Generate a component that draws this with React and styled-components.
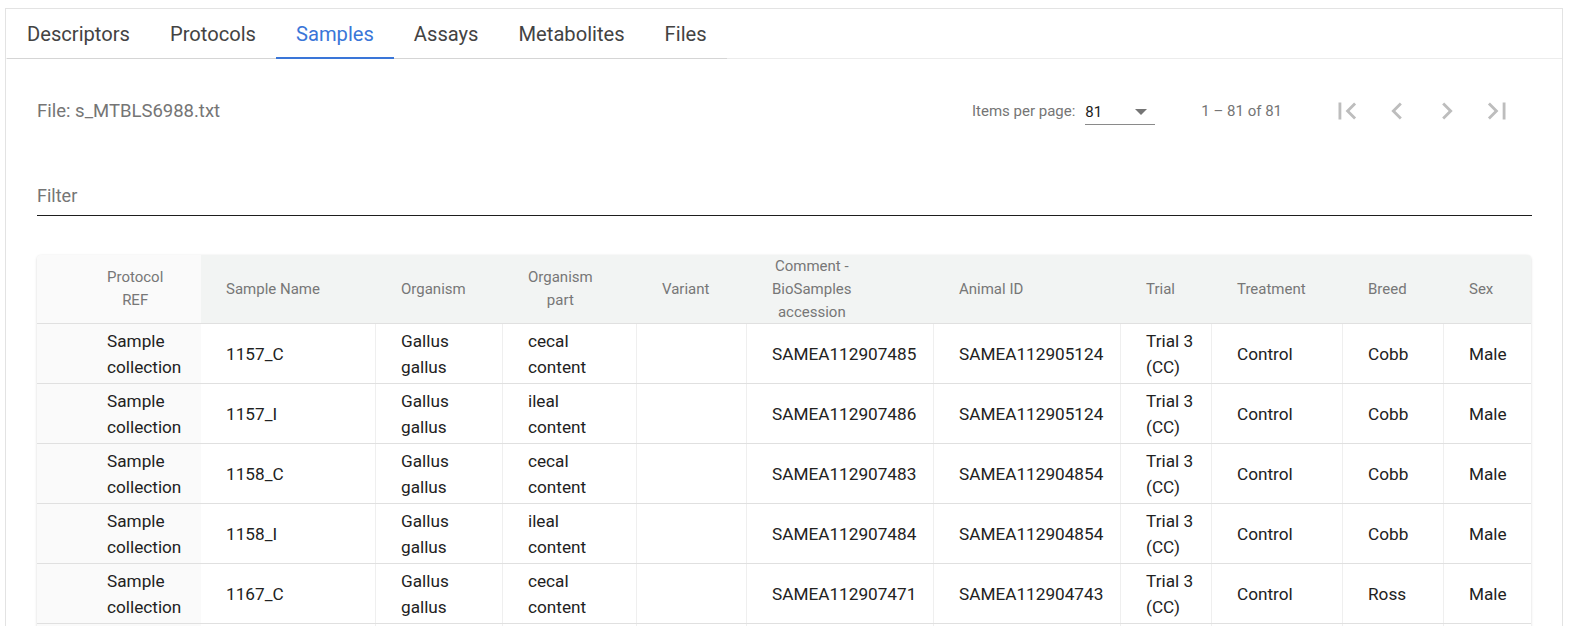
import React from 'react';
import styled, { createGlobalStyle, css } from 'styled-components';

const GlobalStyle = createGlobalStyle`
  html, body {
    margin: 0;
    padding: 0;
    overflow: hidden;
    background: #ffffff;
    font-family: Roboto, "Liberation Sans", sans-serif;
  }
`;

const COLUMNS = [164, 175, 127, 134, 110, 187, 187, 91, 131, 101, 87];

const HEADERS = [
  ['Protocol', 'REF'],
  ['Sample Name'],
  ['Organism'],
  ['Organism', 'part'],
  ['Variant'],
  ['Comment -', 'BioSamples', 'accession'],
  ['Animal ID'],
  ['Trial'],
  ['Treatment'],
  ['Breed'],
  ['Sex'],
];

const ROWS = [
  ['1157_C', 'cecal content', 'SAMEA112907485', 'SAMEA112905124', 'Cobb'],
  ['1157_I', 'ileal content', 'SAMEA112907486', 'SAMEA112905124', 'Cobb'],
  ['1158_C', 'cecal content', 'SAMEA112907483', 'SAMEA112904854', 'Cobb'],
  ['1158_I', 'ileal content', 'SAMEA112907484', 'SAMEA112904854', 'Cobb'],
  ['1167_C', 'cecal content', 'SAMEA112907471', 'SAMEA112904743', 'Ross'],
  ['1167_I', 'ileal content', 'SAMEA112907472', 'SAMEA112904743', 'Ross'],
];

const TABS = ['Descriptors', 'Protocols', 'Samples', 'Assays', 'Metabolites', 'Files'];

const Card = styled.div`
  margin: 8px 0 0 5px;
  width: 1556px;
  border: 1px solid #e3e3e3;
  background: #fff;
`;

const TabHeader = styled.div`
  display: flex;
  height: 49px;
  border-bottom: 1px solid #ececec;
`;

const TabList = styled.div`
  display: flex;
  margin-left: 1px;
  height: 50px;
  box-sizing: border-box;
  border-bottom: 1px solid #d5d5d5;
`;

const Tab = styled.div`
  height: 50px;
  padding: 2px 20px 0;
  display: flex;
  align-items: center;
  font-size: 20.15px;
  color: ${(p) => (p.$active ? '#3a76d8' : '#434343')};
  box-sizing: border-box;
  border-bottom: 2px solid ${(p) => (p.$active ? '#3a76d8' : 'transparent')};
`;

const Body = styled.div`
  padding: 24px 30px 0 31px;
`;

const Toolbar = styled.div`
  display: flex;
  align-items: center;
  justify-content: space-between;
  height: 56px;
`;

const FileLabel = styled.div`
  font-size: 18.5px;
  color: #757575;
`;

const Paginator = styled.div`
  display: flex;
  align-items: center;
  margin-right: 10px;
  font-size: 15px;
  color: #757575;
`;

const PageSelect = styled.div`
  margin-left: 10px;
  width: 70px;
  height: 28px;
  box-sizing: border-box;
  border-bottom: 1px solid #8a8a8a;
  display: flex;
  align-items: center;
  justify-content: space-between;
  color: #212121;
  padding-top: 2px;
`;

const Caret = styled.span`
  width: 0;
  height: 0;
  border-left: 6px solid transparent;
  border-right: 6px solid transparent;
  border-top: 6px solid #757575;
  margin-right: 8px;
`;

const RangeLabel = styled.div`
  margin: 0 40px 0 46px;
`;

const PageButton = styled.div`
  width: 50px;
  height: 40px;
  display: flex;
  align-items: center;
  justify-content: center;
  color: #bdbdbd;
`;

const FilterField = styled.div`
  margin-top: 32px;
  height: 45px;
  border-bottom: 1px solid #1e1e1e;
  display: flex;
  align-items: center;
  font-size: 18px;
  color: #757575;
  padding-top: 4px;
  box-sizing: border-box;
`;

const Table = styled.div`
  margin-top: 39px;
  width: 1494px;
  border-radius: 4px 4px 0 0;
  box-shadow: 0 1px 3px rgba(0, 0, 0, 0.14), 0 0 1px rgba(0, 0, 0, 0.08);
  overflow: hidden;
`;

const Row = styled.div`
  display: grid;
  grid-template-columns: ${COLUMNS.map((c) => `${c}px`).join(' ')};
  grid-template-rows: 100%;
  border-bottom: 1px solid #e0e0e0;
  height: ${(p) => (p.$head ? '69px' : '60px')};
  box-sizing: border-box;
  background: ${(p) => (p.$head ? '#f2f4f3' : '#ffffff')};
`;

const cellBase = css`
  display: flex;
  align-items: center;
  box-sizing: border-box;
  padding: 0 17px 0 25px;
  padding-left: ${(p) => (p.$first ? '70px' : '25px')};
  background: ${(p) => (p.$first ? '#fafafa' : 'transparent')};
`;

const HeadCell = styled.div`
  ${cellBase}
  font-size: 15px;
  line-height: 23px;
  color: #777777;
`;

const HeadText = styled.span`
  text-align: center;
  white-space: nowrap;
`;

const Cell = styled.div`
  ${cellBase}
  font-size: 17.2px;
  line-height: 26px;
  color: #222222;
  border-right: ${(p) => (p.$first || p.$last ? 'none' : '1px solid #efefef')};
`;

const Icon = ({ d }) => (
  <svg width="34" height="34" viewBox="0 0 24 24" fill="currentColor">
    <path d={d} />
  </svg>
);

const ICONS = [
  'M18.41 16.59L13.82 12l4.59-4.59L17 6l-6 6 6 6zM6 6h2v12H6z',
  'M15.41 7.41L14 6l-6 6 6 6 1.41-1.41L10.83 12z',
  'M10 6L8.59 7.41 13.17 12l-4.58 4.59L10 18l6-6z',
  'M5.59 7.41L10.18 12l-4.59 4.59L7 18l6-6-6-6zM16 6h2v12h-2z',
];

export default function App() {
  return (
    <>
      <GlobalStyle />
      <Card>
        <TabHeader>
          <TabList>
            {TABS.map((t) => (
              <Tab key={t} $active={t === 'Samples'}>
                {t}
              </Tab>
            ))}
          </TabList>
        </TabHeader>
        <Body>
          <Toolbar>
            <FileLabel>File: s_MTBLS6988.txt</FileLabel>
            <Paginator>
              Items per page:
              <PageSelect>
                81
                <Caret />
              </PageSelect>
              <RangeLabel>1 – 81 of 81</RangeLabel>
              {ICONS.map((d) => (
                <PageButton key={d}>
                  <Icon d={d} />
                </PageButton>
              ))}
            </Paginator>
          </Toolbar>
          <FilterField>Filter</FilterField>
          <Table>
            <Row $head>
              {HEADERS.map((lines, i) => (
                <HeadCell key={i} $first={i === 0}>
                  <HeadText>
                    {lines.map((l, j) => (
                      <React.Fragment key={j}>
                        {j > 0 && <br />}
                        {l}
                      </React.Fragment>
                    ))}
                  </HeadText>
                </HeadCell>
              ))}
            </Row>
            {ROWS.map(([name, part, acc, animal, breed]) => {
              const cells = [
                'Sample collection',
                name,
                'Gallus gallus',
                part,
                '',
                acc,
                animal,
                'Trial 3 (CC)',
                'Control',
                breed,
                'Male',
              ];
              return (
                <Row key={name}>
                  {cells.map((c, i) => (
                    <Cell key={i} $first={i === 0} $last={i === cells.length - 1}>
                      {c}
                    </Cell>
                  ))}
                </Row>
              );
            })}
          </Table>
        </Body>
      </Card>
    </>
  );
}
